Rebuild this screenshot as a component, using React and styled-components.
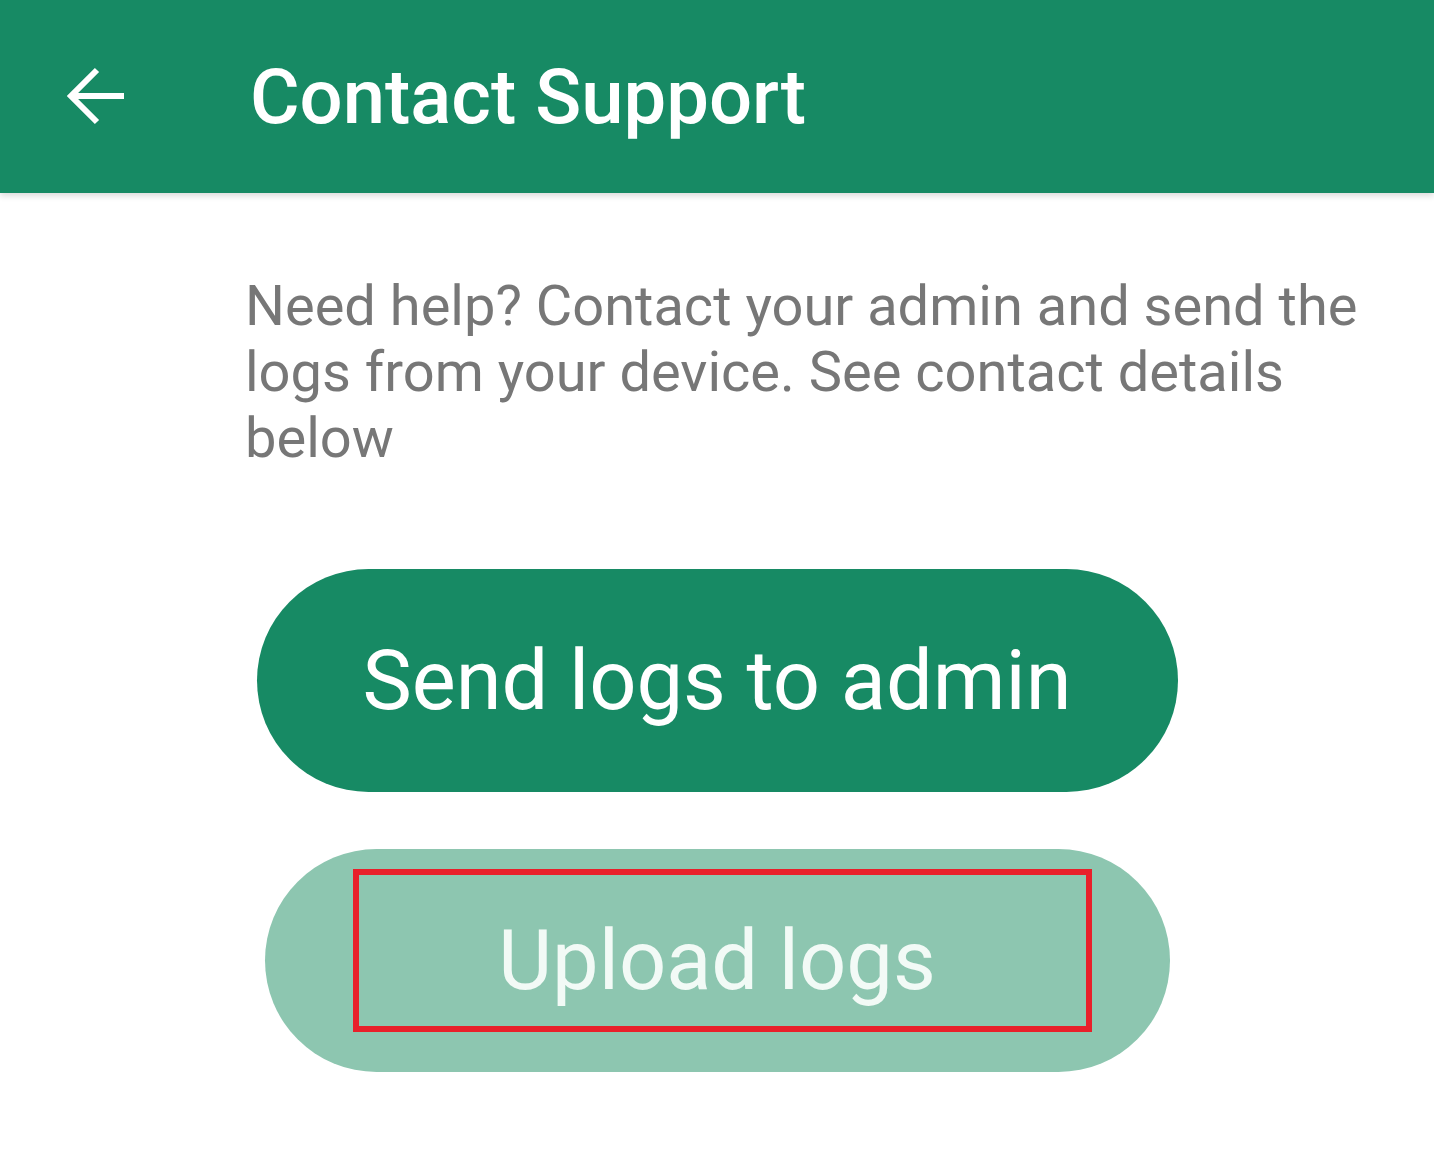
import React from "react";
import styled, { createGlobalStyle } from "styled-components";

const GlobalStyle = createGlobalStyle`
  html, body {
    margin: 0;
    padding: 0;
    background: #ffffff;
    font-family: Roboto, "Noto Sans", Arial, sans-serif;
  }
`;

const Page = styled.div`
  width: 1434px;
  min-height: 1168px;
  background: #ffffff;
  overflow: hidden;
`;

const Toolbar = styled.header`
  height: 193px;
  background: #178a64;
  display: flex;
  align-items: center;
  box-shadow: 0 3px 6px rgba(0, 0, 0, 0.14);
  position: relative;
`;

const BackButton = styled.button`
  width: 60px;
  height: 60px;
  margin-left: 66px;
  padding: 0;
  border: 0;
  background: transparent;
  display: flex;
  align-items: center;
  justify-content: center;
  cursor: pointer;
`;

const Title = styled.h1`
  margin: 0 0 0 124px;
  color: #ffffff;
  font-size: 76px;
  font-weight: 500;
  line-height: 1;
`;

const Content = styled.main`
  padding: 80px 0 0 245px;
`;

const Intro = styled.p`
  margin: 0;
  color: #777777;
  font-size: 56px;
  line-height: 66px;
  max-width: 1150px;
`;

const Actions = styled.div`
  display: flex;
  flex-direction: column;
  align-items: center;
  gap: 57px;
  margin-top: 98px;
`;

const PillButton = styled.button`
  width: ${(p) => p.$width}px;
  height: 223px;
  border: 0;
  border-radius: 112px;
  background: ${(p) => (p.$disabled ? "#8dc6b0" : "#178a64")};
  color: ${(p) => (p.$disabled ? "#f2faf6" : "#ffffff")};
  font-family: Roboto, "Noto Sans", Arial, sans-serif;
  font-size: 83px;
  display: flex;
  align-items: center;
  justify-content: center;
  position: relative;
  cursor: pointer;
`;

const Label = styled.span`
  display: inline-block;
`;

const Highlight = styled.span`
  position: absolute;
  left: 88px;
  top: 20px;
  width: 739px;
  height: 163px;
  border: 6px solid #e8202a;
  box-sizing: border-box;
`;

const ArrowIcon = () => (
  <svg width="60" height="60" viewBox="0 0 60 60">
    <path
      d="M58 29H5M31 3L5 29l26 26"
      fill="none"
      stroke="#ffffff"
      strokeWidth="6"
    />
  </svg>
);

export default function App() {
  return (
    <Page>
      <GlobalStyle />
      <Toolbar>
        <BackButton aria-label="Back">
          <ArrowIcon />
        </BackButton>
        <Title>Contact Support</Title>
      </Toolbar>
      <Content>
        <Intro>
          Need help? Contact your admin and send the logs from your device. See
          contact details below
        </Intro>
      </Content>
      <Actions>
        <PillButton $width={921}>
          <Label>Send logs to admin</Label>
        </PillButton>
        <PillButton $width={905} $disabled>
          <Highlight />
          <Label>Upload logs</Label>
        </PillButton>
      </Actions>
    </Page>
  );
}
